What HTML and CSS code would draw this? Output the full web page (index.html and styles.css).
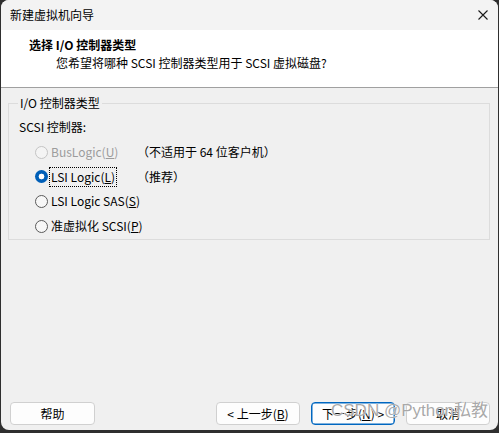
FILE: index.html
```html
<!DOCTYPE html>
<html lang="zh-CN">
<head>
<meta charset="utf-8">
<title>新建虚拟机向导</title>
<link rel="stylesheet" href="styles.css">
</head>
<body>
<div class="window">
  <div class="titlebar">
    <span class="title">新建虚拟机向导</span>
    <svg class="close" width="10" height="10" viewBox="0 0 10 10"><path d="M0.5 0.5L9.5 9.5M9.5 0.5L0.5 9.5" stroke="#1a1a1a" stroke-width="1.1" fill="none"/></svg>
  </div>
  <div class="header">
    <div class="h-title">选择 I/O 控制器类型</div>
    <div class="h-sub">您希望将哪种 SCSI 控制器类型用于 SCSI 虚拟磁盘?</div>
  </div>
  <div class="content">
    <fieldset class="group">
      <legend>I/O 控制器类型</legend>
      <div class="caption">SCSI 控制器:</div>
      <div class="options">
        <div class="opt disabled"><span class="lab"><span class="radio"></span><span class="txt">BusLogic(<u>U</u>)</span></span><span class="note">（不适用于 64 位客户机）</span></div>
        <div class="opt"><span class="lab"><span class="radio checked"></span><span class="txt focus">LSI Logic(<u>L</u>)</span></span><span class="note">（推荐）</span></div>
        <div class="opt"><span class="lab"><span class="radio"></span><span class="txt">LSI Logic SAS(<u>S</u>)</span></span></div>
        <div class="opt"><span class="lab"><span class="radio"></span><span class="txt">准虚拟化 SCSI(<u>P</u>)</span></span></div>
      </div>
    </fieldset>
    <div class="spacer"></div>
    <div class="footer">
      <button class="btn">帮助</button>
      <div class="right">
        <button class="btn">&lt; 上一步(<u>B</u>)</button>
        <button class="btn default">下一步(<u>N</u>) &gt;</button>
        <button class="btn">取消</button>
      </div>
      <span class="watermark">CSDN @Python私教</span>
    </div>
  </div>
</div>
</body>
</html>
```

FILE: styles.css
```css
* { box-sizing: border-box; }
html, body { margin: 0; padding: 0; }
body {
  width: 499px;
  height: 433px;
  background: #2f2f2f;
  font-family: "Noto Sans CJK SC", "Noto Sans", sans-serif;
  font-size: 12px;
  color: #000;
  overflow: hidden;
}
.window {
  margin-left: 1px;
  width: 497px;
  height: 430px;
  border-radius: 8px;
  background: #f0f0f0;
  overflow: hidden;
  display: flex;
  flex-direction: column;
}
.titlebar {
  height: 30px;
  flex: none;
  display: flex;
  align-items: center;
  justify-content: space-between;
  padding: 0 10px 0 9px;
  background: #f3f3f3;
}
.title { line-height: 18px; }
.header {
  height: 58px;
  flex: none;
  background: #fff;
  border-bottom: 1px solid #a0a0a0;
  padding-top: 6px;
}
.h-title {
  padding-left: 28px;
  line-height: 18px;
  font-weight: bold;
}
.h-sub {
  padding-left: 55px;
  line-height: 18px;
}
.content {
  flex: 1;
  display: flex;
  flex-direction: column;
  position: relative;
}
.group {
  margin: 6px 8px 0 7px;
  padding: 0 0 1px 9px;
  border: 1px solid #dcdcdc;
  min-width: 0;
}
.group legend {
  margin-left: 0;
  padding: 0 2px;
  line-height: 18px;
}
.caption {
  margin-top: 6px;
  line-height: 18px;
  padding-left: 1px;
}
.options {
  margin-top: 4px;
  padding-left: 17px;
}
.opt {
  height: 24.6px;
  display: grid;
  grid-template-columns: 102px max-content;
  align-items: center;
  white-space: nowrap;
}
.lab {
  display: flex;
  align-items: center;
  white-space: nowrap;
}
.radio {
  width: 13px;
  height: 13px;
  border-radius: 50%;
  border: 1px solid #5a5a5a;
  background: #f7f7f7;
  flex: none;
  margin-right: 3px;
}
.radio.checked {
  border: none;
  background: radial-gradient(circle, #fff 0 2.6px, #005fb8 3.2px);
}
.disabled .radio { border-color: #c4c4c4; background: #f4f4f4; }
.disabled .txt { color: #9c9c9c; }
.txt { line-height: 18px; padding: 0 1px; margin-left: -1px; white-space: nowrap; flex: none; }
.txt.focus { outline: 1px dotted #000; outline-offset: 0; }
.note { line-height: 18px; }
.spacer { flex: 1; }
.footer {
  display: flex;
  justify-content: space-between;
  padding: 0 8px 5px 9px;
  position: relative;
}
.right { display: flex; gap: 11px; }
.btn {
  width: 85px;
  height: 23px;
  padding: 0;
  border: 1px solid #d0d0d0;
  border-radius: 4px;
  background: #fdfdfd;
  font-family: inherit;
  font-size: 12px;
  color: #000;
  line-height: 18px;
}
.right .btn { width: 84px; }
.btn.default { border-color: #0067c0; box-shadow: inset 0 0 0 0.5px #0067c0; }
.watermark {
  position: absolute;
  left: 330px;
  top: -3px;
  font-family: "Liberation Sans", "Noto Sans CJK SC", sans-serif;
  font-size: 17px;
  line-height: 24px;
  color: rgba(130, 130, 130, 0.7);
  text-shadow: 0 0 1px #fff, 0 0 1px #fff;
  pointer-events: none;
}
```
